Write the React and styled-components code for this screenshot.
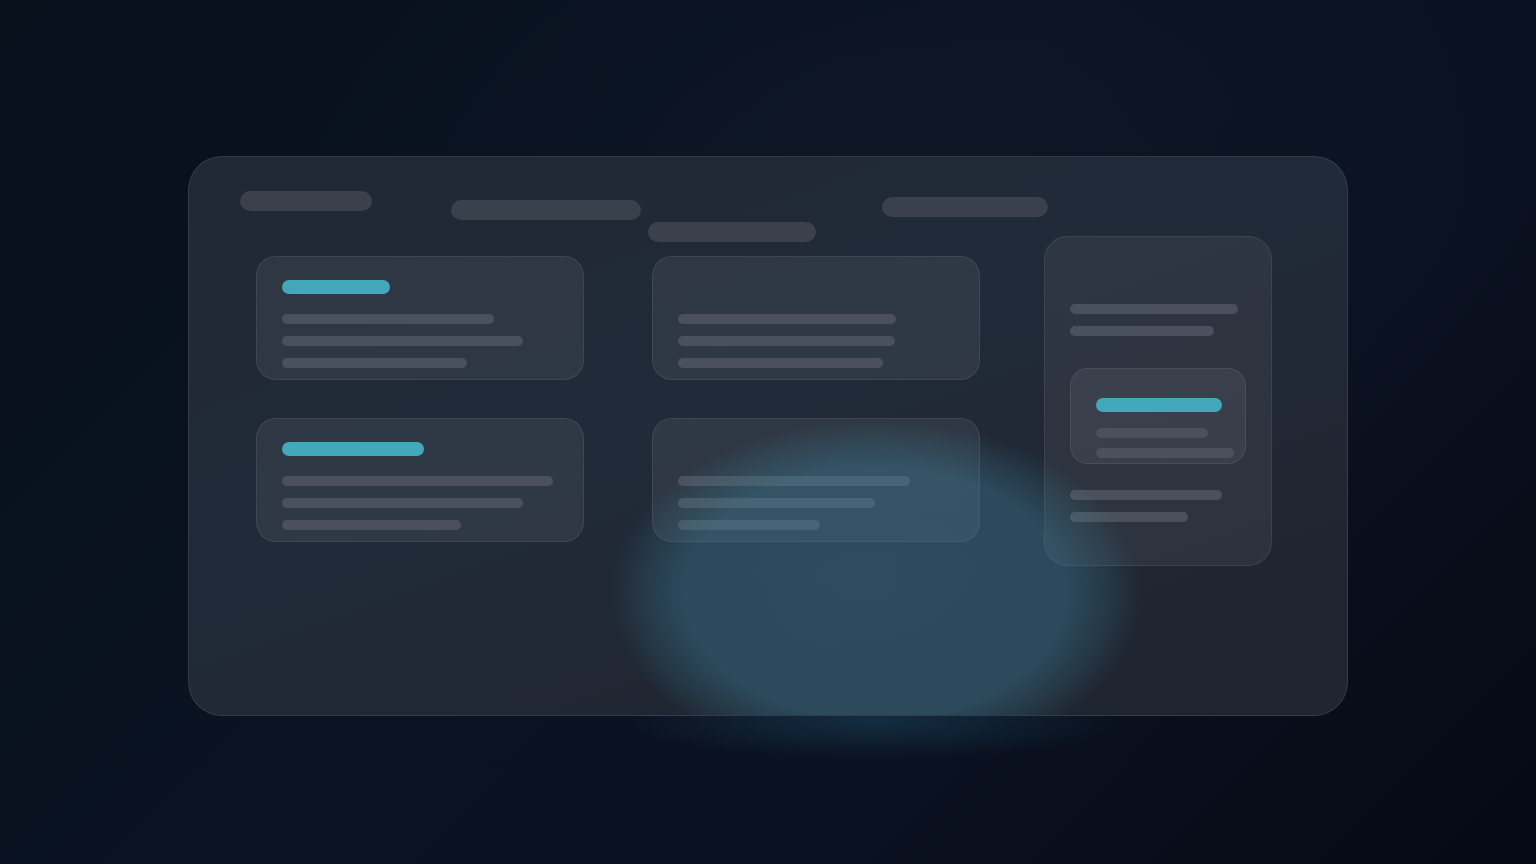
import React from "react";
import styled, { createGlobalStyle } from "styled-components";

const Global = createGlobalStyle`
  html, body { margin: 0; padding: 0; }
  body {
    width: 1536px;
    height: 864px;
    overflow: hidden;
    font-family: "Inter", "Liberation Sans", sans-serif;
    background:
      radial-gradient(ellipse 900px 600px at 60% 25%, rgba(20, 28, 46, 0.45), transparent 70%),
      linear-gradient(135deg, #07101b 0%, #0b1322 45%, #0a1120 70%, #050913 100%);
  }
`;

const Stage = styled.main`
  position: relative;
  width: 1536px;
  height: 864px;
  box-sizing: border-box;
  padding-top: 156px;
  display: flex;
  justify-content: center;
  align-items: flex-start;
`;

const OuterGlow = styled.div`
  position: absolute;
  left: 625px;
  top: 680px;
  width: 500px;
  height: 80px;
  background: radial-gradient(
    ellipse closest-side at center,
    rgba(40, 110, 140, 0.3) 0%,
    rgba(40, 110, 140, 0.14) 55%,
    rgba(40, 110, 140, 0) 100%
  );
  pointer-events: none;
`;

const Panel = styled.section`
  position: relative;
  overflow: hidden;
  width: 1160px;
  height: 560px;
  box-sizing: border-box;
  border: 1px solid rgba(255, 255, 255, 0.09);
  border-radius: 34px;
  background: linear-gradient(160deg, #212835 0%, #212a38 45%, #1f242e 100%);
  padding: 34px 0 0 51px;
`;

const Header = styled.header`
  display: flex;
  align-items: flex-start;
  height: 45px;
`;

const Pill = styled.div`
  flex: none;
  width: ${(p) => p.$w}px;
  height: 20px;
  margin-left: ${(p) => p.$ml || 0}px;
  margin-top: ${(p) => p.$mt || 0}px;
  border-radius: 10px;
  background: #3a404c;
`;

const Body = styled.div`
  display: flex;
  align-items: flex-start;
  margin-left: 16px;
`;

const Column = styled.div`
  flex: none;
  display: flex;
  flex-direction: column;
  gap: 38px;
  margin-left: ${(p) => p.$ml || 0}px;
  margin-top: ${(p) => p.$mt || 0}px;
`;

const Card = styled.article`
  width: 328px;
  height: 124px;
  box-sizing: border-box;
  padding: 23px 25px;
  border: 1px solid rgba(255, 255, 255, 0.08);
  border-radius: 20px;
  background: rgba(255, 255, 255, 0.065);
  display: flex;
  flex-direction: column;
`;

const Accent = styled.div`
  flex: none;
  width: ${(p) => p.$w}px;
  height: 14px;
  border-radius: 7px;
  background: #43a8ba;
  opacity: ${(p) => (p.$hidden ? 0 : 1)};
  margin-bottom: ${(p) => p.$mb || 20}px;
`;

const Lines = styled.div`
  flex: none;
  display: flex;
  flex-direction: column;
  gap: ${(p) => p.$gap || 12}px;
`;

const Line = styled.div`
  flex: none;
  width: ${(p) => p.$w}px;
  height: 10px;
  border-radius: 5px;
  background: #4b515c;
`;

const SideCard = styled.aside`
  width: 228px;
  height: 330px;
  box-sizing: border-box;
  padding: 67px 25px 0;
  border: 1px solid rgba(255, 255, 255, 0.08);
  border-radius: 24px;
  background: rgba(255, 255, 255, 0.06);
  display: flex;
  flex-direction: column;
  align-items: flex-start;
`;

const InnerCard = styled.div`
  flex: none;
  width: 176px;
  height: 96px;
  box-sizing: border-box;
  margin: 32px 0 26px;
  padding: 29px 25px 0;
  border: 1px solid rgba(255, 255, 255, 0.08);
  border-radius: 18px;
  background: rgba(255, 255, 255, 0.06);
`;

const Glow = styled.div`
  position: absolute;
  left: 422px;
  top: 262px;
  width: 530px;
  height: 350px;
  border-radius: 50%;
  background: radial-gradient(
    ellipse closest-side at center,
    rgba(62, 132, 158, 0.4) 0%,
    rgba(62, 132, 158, 0.38) 72%,
    rgba(62, 132, 158, 0.18) 88%,
    rgba(62, 132, 158, 0) 100%
  );
  pointer-events: none;
`;

const cards = [
  [
    { accent: 108, lines: [212, 241, 185] },
    { accent: 142, lines: [271, 241, 179] },
  ],
  [
    { accent: 108, hidden: true, lines: [218, 217, 205] },
    { accent: 108, hidden: true, lines: [232, 197, 142] },
  ],
];

export default function App() {
  return (
    <>
      <Global />
      <Stage>
        <OuterGlow />
        <Panel>
          <Header>
            <Pill $w={132} />
            <Pill $w={190} $ml={79} $mt={9} />
            <Pill $w={168} $ml={7} $mt={31} />
            <Pill $w={166} $ml={66} $mt={6} />
          </Header>
          <Body>
            {cards.map((col, ci) => (
              <Column key={ci} $ml={ci === 0 ? 0 : 68} $mt={20}>
                {col.map((c, i) => (
                  <Card key={i}>
                    <Accent $w={c.accent} $hidden={c.hidden} />
                    <Lines>
                      {c.lines.map((w, j) => (
                        <Line key={j} $w={w} />
                      ))}
                    </Lines>
                  </Card>
                ))}
              </Column>
            ))}
            <Column $ml={64}>
              <SideCard>
                <Lines>
                  <Line $w={168} />
                  <Line $w={144} />
                </Lines>
                <InnerCard>
                  <Accent $w={126} $mb={16} />
                  <Lines $gap={10}>
                    <Line $w={112} />
                    <Line $w={138} />
                  </Lines>
                </InnerCard>
                <Lines>
                  <Line $w={152} />
                  <Line $w={118} />
                </Lines>
              </SideCard>
            </Column>
          </Body>
          <Glow />
        </Panel>
      </Stage>
    </>
  );
}
